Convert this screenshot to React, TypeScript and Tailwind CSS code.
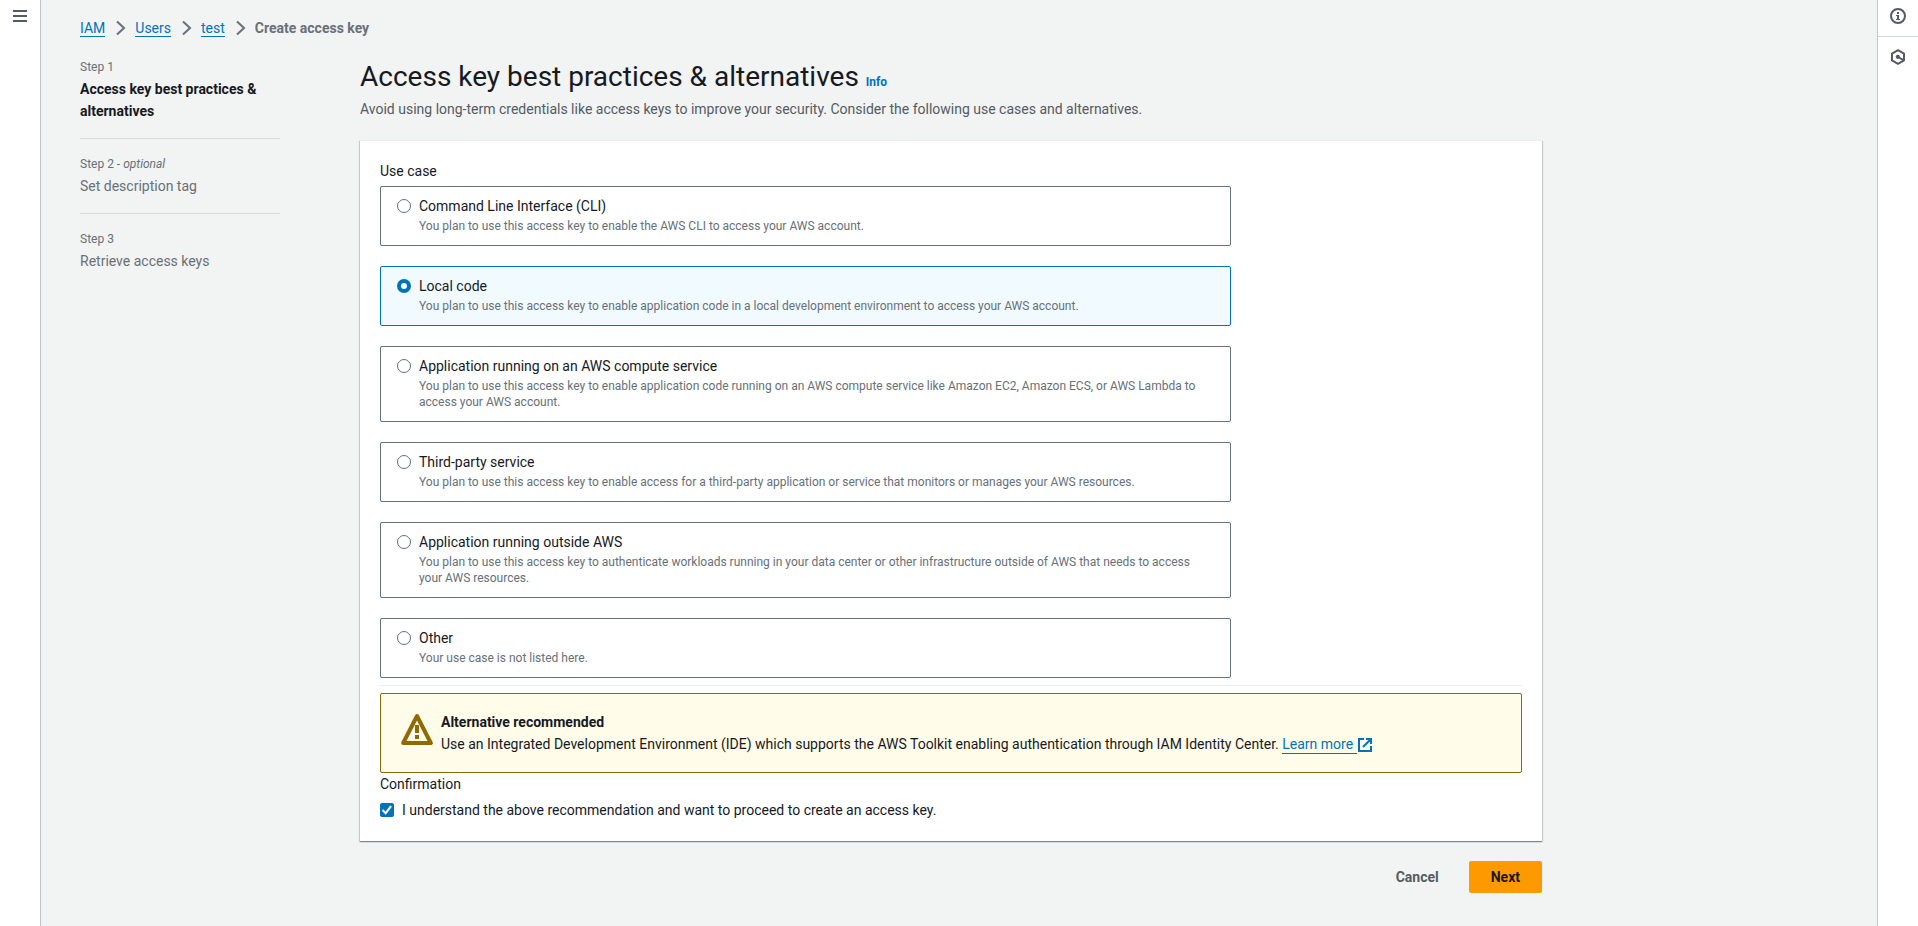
import { useState } from "react";

const useCases = [
  {
    id: "cli",
    title: "Command Line Interface (CLI)",
    description: "You plan to use this access key to enable the AWS CLI to access your AWS account.",
  },
  {
    id: "local",
    title: "Local code",
    description:
      "You plan to use this access key to enable application code in a local development environment to access your AWS account.",
  },
  {
    id: "compute",
    title: "Application running on an AWS compute service",
    description:
      "You plan to use this access key to enable application code running on an AWS compute service like Amazon EC2, Amazon ECS, or AWS Lambda to access your AWS account.",
  },
  {
    id: "third-party",
    title: "Third-party service",
    description:
      "You plan to use this access key to enable access for a third-party application or service that monitors or manages your AWS resources.",
  },
  {
    id: "outside",
    title: "Application running outside AWS",
    description:
      "You plan to use this access key to authenticate workloads running in your data center or other infrastructure outside of AWS that needs to access your AWS resources.",
  },
  { id: "other", title: "Other", description: "Your use case is not listed here." },
];

const crumbs = ["IAM", "Users", "test"];

function MenuIcon() {
  return (
    <svg width="16" height="16" viewBox="0 0 16 16" fill="none" stroke="currentColor" strokeWidth="2" aria-hidden="true">
      <path d="M1 3h14M1 8h14M1 13h14" />
    </svg>
  );
}

function ChevronIcon() {
  return (
    <svg width="10" height="16" viewBox="0 0 10 16" fill="none" stroke="currentColor" strokeWidth="2" aria-hidden="true">
      <path d="M1 1.5 8 8l-7 6.5" />
    </svg>
  );
}

function InfoIcon() {
  return (
    <svg width="16" height="16" viewBox="0 0 16 16" fill="none" stroke="currentColor" aria-hidden="true">
      <circle cx="8" cy="8" r="7" strokeWidth="2" />
      <path d="M7 4h2v2H7z" fill="currentColor" stroke="none" />
      <path d="M6 7h3v4h1v1H6v-1h1V8H6z" fill="currentColor" stroke="none" />
    </svg>
  );
}

function HexagonIcon() {
  return (
    <svg width="16" height="16" viewBox="0 0 16 16" fill="none" stroke="currentColor" strokeWidth="2" aria-hidden="true">
      <path d="M8 1.2 14 4.6v6.8L8 14.8 2 11.4V4.6z" strokeLinejoin="round" />
      <circle cx="7.8" cy="7.8" r="2.1" fill="currentColor" stroke="none" />
      <path d="m8 8 5.5 3.2" />
    </svg>
  );
}

function WarningIcon() {
  return (
    <svg width="32" height="32" viewBox="0 0 32 32" fill="none" stroke="currentColor" strokeWidth="4" aria-hidden="true">
      <path d="M16 3 29.8 30H2.2z" strokeLinejoin="round" />
      <path d="M16 12v8M16 22v4" />
    </svg>
  );
}

function ExternalIcon() {
  return (
    <svg width="14" height="14" viewBox="0 0 14 14" fill="none" stroke="currentColor" strokeWidth="2" aria-hidden="true">
      <path d="M6 1H1v12h12V8" />
      <path d="M8 1h5v5M13 1 5 9" />
    </svg>
  );
}

function Step({ label, optional, title, active, last }: { label: string; optional?: boolean; title: string; active?: boolean; last?: boolean }) {
  return (
    <li className={last ? "pt-4" : "border-b border-[#d5dbdb] pt-4 pb-4 first:pt-0"} aria-current={active ? "step" : undefined}>
      <div className="mb-0.5 text-xs leading-[18px] text-[#687078]">
        {label}
        {optional && (
          <>
            {" - "}
            <i>optional</i>
          </>
        )}
      </div>
      <div className={active ? "font-bold text-[#16191f]" : "text-[#687078]"}>{title}</div>
    </li>
  );
}

export default function App() {
  const [selected, setSelected] = useState("local");
  const [confirmed, setConfirmed] = useState(true);

  return (
    <div className="flex min-h-screen bg-[#f2f3f3] font-[Roboto,'Noto_Sans',sans-serif] text-sm leading-[22px] text-[#16191f]">
      <nav className="w-[41px] shrink-0 border-r border-[#bec4c7] bg-white text-[#545b64]">
        <button type="button" aria-label="Open navigation" className="flex w-full justify-center pt-2">
          <MenuIcon />
        </button>
      </nav>

      <div className="min-w-0 grow px-[39px] pt-[17px] pb-8">
        <nav aria-label="Breadcrumbs">
          <ol className="flex items-center text-[#687078]">
            {crumbs.map((c) => (
              <li key={c} className="flex items-center">
                <a href="#" className="border-b border-[#0073bb] leading-4 text-[#0073bb]">
                  {c}
                </a>
                <span className="mr-[9px] ml-[11px]">
                  <ChevronIcon />
                </span>
              </li>
            ))}
            <li className="font-bold">Create access key</li>
          </ol>
        </nav>

        <div className="mt-[19px] flex max-w-[1462px] gap-20">
          <ol className="w-[200px] shrink-0">
            <Step label="Step 1" title="Access key best practices & alternatives" active />
            <Step label="Step 2" optional title="Set description tag" />
            <Step label="Step 3" title="Retrieve access keys" last />
          </ol>

          <main className="min-w-0 grow">
            <h1 className="pt-px text-[28px] leading-9">
              Access key best practices &amp; alternatives{" "}
              <a href="#" className="text-xs font-bold text-[#0073bb]">
                Info
              </a>
            </h1>
            <p className="mt-[3px] text-[#545b64]">
              Avoid using long-term credentials like access keys to improve your security. Consider the following use cases and
              alternatives.
            </p>

            <form>
              <section className="mt-5 border-t border-[#eaeded] bg-white px-5 pt-[19px] pb-5 shadow-[0_1px_1px_0_rgba(0,28,36,0.3),1px_1px_1px_0_rgba(0,28,36,0.15),-1px_1px_1px_0_rgba(0,28,36,0.15)]">
                <fieldset>
                  <legend>Use case</legend>
                  <div className="mt-1 grid grid-cols-4 gap-x-6 gap-y-5">
                    {useCases.map((u) => (
                      <label
                        key={u.id}
                        className={
                          u.id === selected
                            ? "col-span-3 flex gap-2 rounded-xs border border-[#0073bb] bg-[#f1faff] px-4 pt-2 pb-[11px]"
                            : "col-span-3 flex gap-2 rounded-xs border border-[#687078] bg-white px-4 pt-2 pb-[11px]"
                        }
                      >
                        <input
                          type="radio"
                          name="use-case"
                          value={u.id}
                          checked={u.id === selected}
                          onChange={() => setSelected(u.id)}
                          className="mt-1 size-3.5 shrink-0 appearance-none rounded-full border border-[#687078] bg-white checked:border-4 checked:border-[#0073bb]"
                        />
                        <span className="min-w-0">
                          <span className="block">{u.title}</span>
                          <span className="mt-px block text-xs leading-4 text-[#687078]">{u.description}</span>
                        </span>
                      </label>
                    ))}
                  </div>
                </fieldset>

                <hr className="my-[7px] border-[#eaeded]" />

                <div role="status" className="flex items-start gap-2 rounded-xs border border-[#906806] bg-[#fffce9] px-5 py-[17px]">
                  <span className="pt-0.5 text-[#906806]">
                    <WarningIcon />
                  </span>
                  <div>
                    <div className="font-bold">Alternative recommended</div>
                    <div>
                      Use an Integrated Development Environment (IDE) which supports the AWS Toolkit enabling authentication through
                      IAM Identity Center.{" "}
                      <a href="#" className="inline-flex items-center gap-px leading-[17px] text-[#0073bb]">
                        <span className="border-b border-[#0073bb] pr-1">Learn more</span>
                        <ExternalIcon />
                      </a>
                    </div>
                  </div>
                </div>

                <fieldset>
                  <legend>Confirmation</legend>
                  <label className="mt-1 flex items-center gap-2">
                    <span className="grid size-3.5 shrink-0">
                      <input
                        type="checkbox"
                        checked={confirmed}
                        onChange={(e) => setConfirmed(e.target.checked)}
                        className="col-start-1 row-start-1 size-3.5 appearance-none rounded-xs border border-[#687078] bg-white checked:border-[#0073bb] checked:bg-[#0073bb]"
                      />
                      {confirmed && (
                        <svg
                          className="pointer-events-none col-start-1 row-start-1"
                          width="14"
                          height="14"
                          viewBox="0 0 14 14"
                          fill="none"
                          stroke="white"
                          strokeWidth="2"
                          aria-hidden="true"
                        >
                          <path d="m2.5 7 3.2 3.2 5.4-7" />
                        </svg>
                      )}
                    </span>
                    I understand the above recommendation and want to proceed to create an access key.
                  </label>
                </fieldset>
              </section>

              <div className="mt-5 flex justify-end gap-2 font-bold">
                <button type="button" className="rounded-xs px-[22px] py-[5px] text-[#545b64]">
                  Cancel
                </button>
                <button type="button" className="rounded-xs bg-[#ff9900] px-[22px] py-[5px] text-[#16191f]">
                  Next
                </button>
              </div>
            </form>
          </main>
        </div>
      </div>

      <aside className="w-[41px] shrink-0 border-l border-[#bec8cb] bg-white text-[#545b64]">
        <button type="button" aria-label="Open help panel" className="flex h-[37px] w-full justify-center border-b border-[#d5dbdb] pt-2">
          <InfoIcon />
        </button>
        <button type="button" aria-label="Open assistant" className="flex w-full justify-center pt-3">
          <HexagonIcon />
        </button>
      </aside>
    </div>
  );
}
